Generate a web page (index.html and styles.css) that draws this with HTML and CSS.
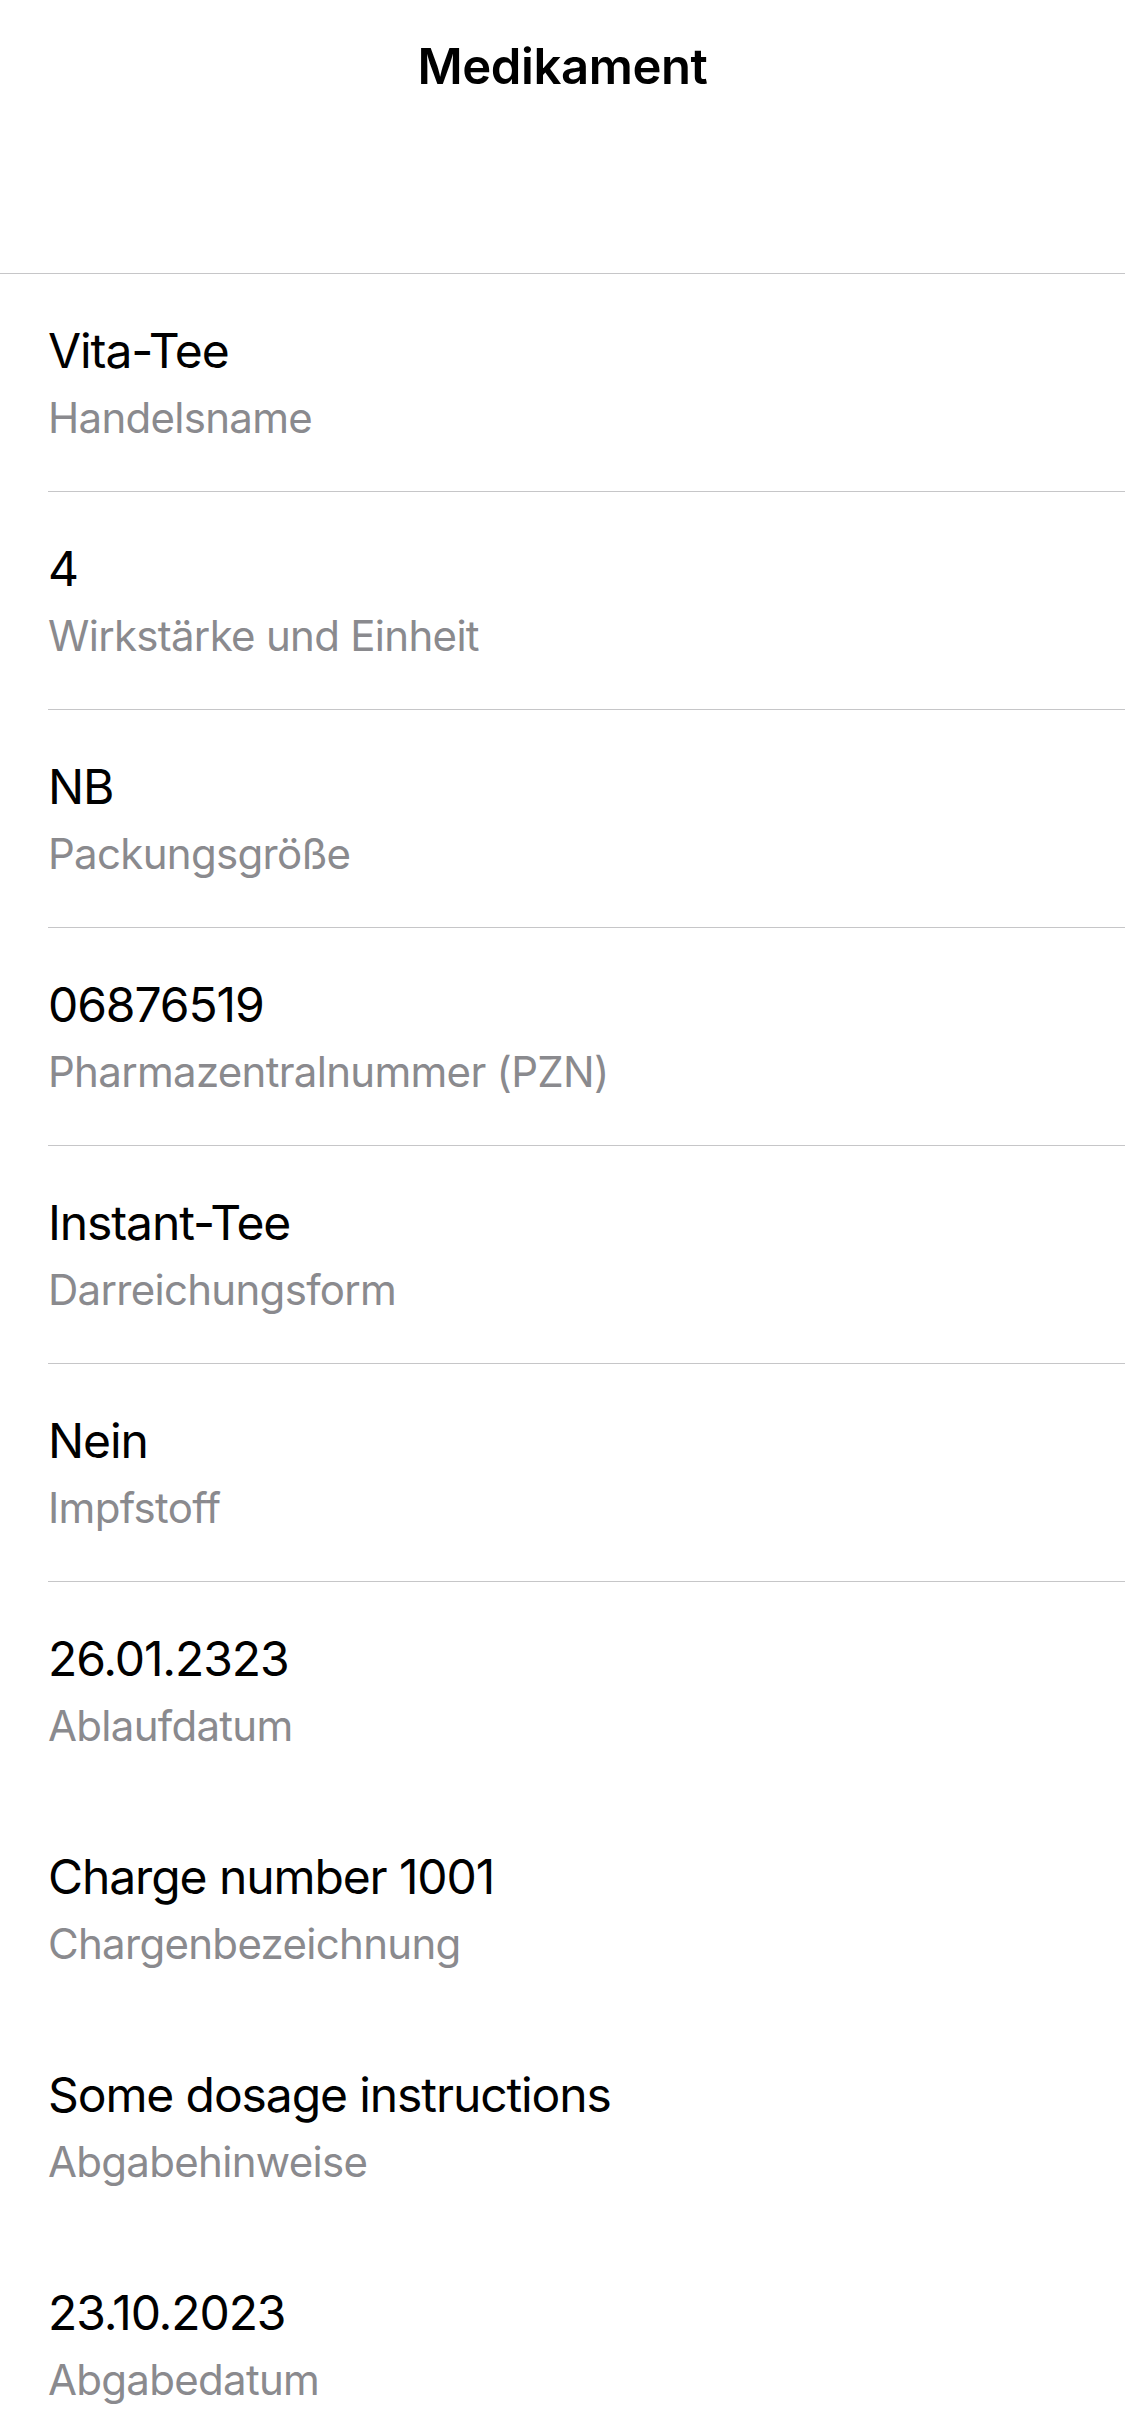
FILE: index.html
```html
<!DOCTYPE html>
<html lang="de">
<head>
<meta charset="utf-8">
<title>Medikament</title>
<link rel="stylesheet" href="styles.css">
</head>
<body>
<header class="nav">
  <h1 class="nav__title">Medikament</h1>
</header>
<main class="list">
  <div class="row"><div class="row__value">Vita-Tee</div><div class="row__label">Handelsname</div></div>
  <div class="row"><div class="row__value">4</div><div class="row__label">Wirkstärke und Einheit</div></div>
  <div class="row"><div class="row__value">NB</div><div class="row__label">Packungsgröße</div></div>
  <div class="row"><div class="row__value">06876519</div><div class="row__label">Pharmazentralnummer (PZN)</div></div>
  <div class="row"><div class="row__value">Instant-Tee</div><div class="row__label">Darreichungsform</div></div>
  <div class="row"><div class="row__value">Nein</div><div class="row__label">Impfstoff</div></div>
  <div class="row row--plain"><div class="row__value">26.01.2323</div><div class="row__label">Ablaufdatum</div></div>
  <div class="row row--plain"><div class="row__value">Charge number 1001</div><div class="row__label">Chargenbezeichnung</div></div>
  <div class="row row--plain"><div class="row__value">Some dosage instructions</div><div class="row__label">Abgabehinweise</div></div>
  <div class="row row--plain"><div class="row__value">23.10.2023</div><div class="row__label">Abgabedatum</div></div>
</main>
</body>
</html>
```
FILE: styles.css
```css
* { box-sizing: border-box; }
html, body { margin: 0; padding: 0; background: #ffffff; }
body {
  font-family: Inter, "Noto Sans", "Liberation Sans", sans-serif;
  color: #000000;
  width: 1125px;
  overflow: hidden;
}
.nav {
  height: 274px;
  padding-top: 37px;
  border-bottom: 1px solid #c6c6c8;
  display: flex;
  justify-content: center;
  align-items: flex-start;
}
.nav__title {
  margin: 0;
  font-size: 49px;
  line-height: 60px;
  font-weight: 600;
  letter-spacing: -0.4px;
}
.list {
  display: flex;
  flex-direction: column;
}
.row {
  height: 218px;
  margin-left: 48px;
  padding-top: 47px;
  border-bottom: 1px solid #c6c6c8;
  display: flex;
  flex-direction: column;
}
.row--plain { border-bottom-color: transparent; }
.row__value {
  font-size: 48px;
  line-height: 60px;
  letter-spacing: -1.1px;
  color: #000000;
}
.row__label {
  margin-top: 11px;
  font-size: 42px;
  line-height: 52px;
  letter-spacing: -0.7px;
  color: #8a8a8e;
}
```
